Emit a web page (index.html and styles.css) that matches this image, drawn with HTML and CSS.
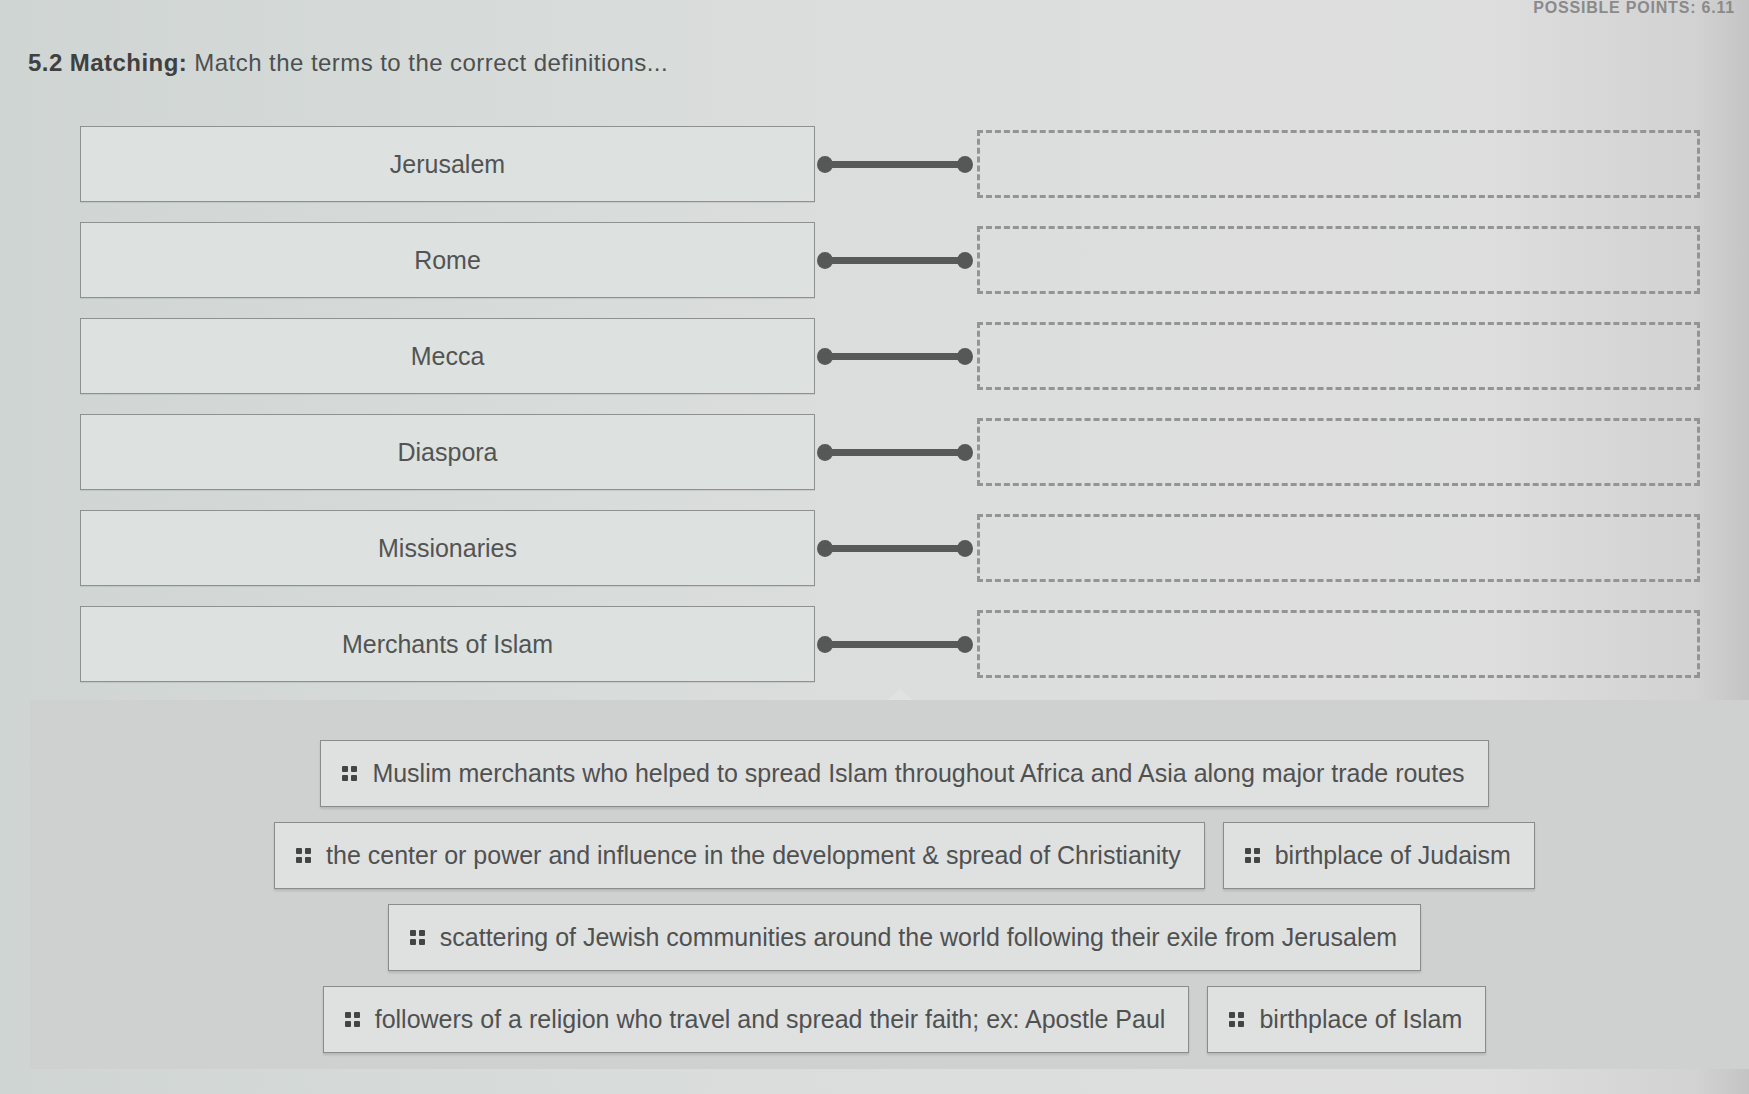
FILE: index.html
```html
<!DOCTYPE html>
<html lang="en">
<head>
<meta charset="utf-8">
<title>5.2 Matching</title>
<link rel="stylesheet" href="styles.css">
</head>
<body>
<div class="page">
  <div class="points">POSSIBLE POINTS: 6.11</div>
  <h2 class="question"><strong>5.2 Matching:</strong> Match the terms to the correct definitions...</h2>

  <div class="pairs">
    <div class="pair">
      <div class="term">Jerusalem</div>
      <div class="link"><span class="dot"></span><span class="bar"></span><span class="dot"></span></div>
      <div class="slot"></div>
    </div>
    <div class="pair">
      <div class="term">Rome</div>
      <div class="link"><span class="dot"></span><span class="bar"></span><span class="dot"></span></div>
      <div class="slot"></div>
    </div>
    <div class="pair">
      <div class="term">Mecca</div>
      <div class="link"><span class="dot"></span><span class="bar"></span><span class="dot"></span></div>
      <div class="slot"></div>
    </div>
    <div class="pair">
      <div class="term">Diaspora</div>
      <div class="link"><span class="dot"></span><span class="bar"></span><span class="dot"></span></div>
      <div class="slot"></div>
    </div>
    <div class="pair">
      <div class="term">Missionaries</div>
      <div class="link"><span class="dot"></span><span class="bar"></span><span class="dot"></span></div>
      <div class="slot"></div>
    </div>
    <div class="pair">
      <div class="term">Merchants of Islam</div>
      <div class="link"><span class="dot"></span><span class="bar"></span><span class="dot"></span></div>
      <div class="slot"></div>
    </div>
  </div>

  <div class="pool">
    <div class="chip"><span class="grip"><i></i><i></i><i></i><i></i></span>Muslim merchants who helped to spread Islam throughout Africa and Asia along major trade routes</div>
    <div class="chip"><span class="grip"><i></i><i></i><i></i><i></i></span>the center or power and influence in the development &amp; spread of Christianity</div>
    <div class="chip"><span class="grip"><i></i><i></i><i></i><i></i></span>birthplace of Judaism</div>
    <div class="chip"><span class="grip"><i></i><i></i><i></i><i></i></span>scattering of Jewish communities around the world following their exile from Jerusalem</div>
    <div class="chip"><span class="grip"><i></i><i></i><i></i><i></i></span>followers of a religion who travel and spread their faith; ex: Apostle Paul</div>
    <div class="chip"><span class="grip"><i></i><i></i><i></i><i></i></span>birthplace of Islam</div>
  </div>
</div>
</body>
</html>
```

FILE: styles.css
```css
* {
  box-sizing: border-box;
}

html,
body {
  margin: 0;
  height: 100%;
  overflow: hidden;
}

body {
  font-family: "Liberation Sans", Arial, sans-serif;
  color: #555;
  background: linear-gradient(90deg, #cfd5d3 0%, #d6dbd9 25%, #dcdedd 55%, #dedede 85%, #d2d2d2 97%, #c4c4c4 100%);
}

.page {
  display: flex;
  flex-direction: column;
}

/* points label in the top corner */
.points {
  align-self: flex-end;
  margin-top: 0;
  padding-right: 14px;
  font-size: 16px;
  line-height: 16px;
  font-weight: bold;
  letter-spacing: 0.8px;
  color: #8a8a8a;
}

.question {
  margin: 32px 0 0 28px;
  font-size: 24px;
  line-height: 30px;
  font-weight: normal;
  letter-spacing: 0.45px;
  color: #4e5050;
}

.question strong {
  color: #404040;
}

/* term rows: term box, connector, dashed drop slot */
.pairs {
  display: flex;
  flex-direction: column;
  gap: 20px;
  margin: 48px 0 0 80px;
}

.pair {
  display: flex;
  align-items: center;
  height: 76px;
}

.term {
  width: 735px;
  height: 76px;
  display: flex;
  align-items: center;
  justify-content: center;
  border: 1.5px solid #8e9190;
  background: #dde1df;
  box-shadow: 0 1px 0 rgba(0, 0, 0, 0.08);
  font-size: 25px;
  color: #525454;
}

.link {
  width: 162px;
  display: flex;
  align-items: center;
  padding: 0 4px 0 2px;
}

.dot {
  width: 16px;
  height: 17px;
  border-radius: 50%;
  background: #575757;
  flex: none;
}

.bar {
  flex: 1;
  height: 7px;
  margin: 0 -3px;
  background: #595959;
}

.slot {
  width: 723px;
  height: 68px;
  border: 3px dashed #939494;
}

/* pool of draggable definitions */
.pool {
  position: relative;
  margin: 18px 0 0 30px;
  padding: 40px 0 16px 30px;
  background: #cfd1d1;
  display: flex;
  flex-wrap: wrap;
  justify-content: center;
  column-gap: 18px;
  row-gap: 15px;
}

.pool::before {
  content: "";
  position: absolute;
  left: 858px;
  top: -12px;
  border-left: 12px solid transparent;
  border-right: 12px solid transparent;
  border-bottom: 12px solid #e0e1e1;
}

.chip {
  height: 67px;
  display: flex;
  align-items: center;
  gap: 15px;
  padding: 0 23px 0 21px;
  border: 1.5px solid #8a8b8b;
  background: #dfe0e0;
  box-shadow: 0 2px 2px rgba(0, 0, 0, 0.12);
  font-size: 25px;
  color: #4f5151;
  white-space: nowrap;
}

.grip {
  display: grid;
  grid-template-columns: 6px 6px;
  grid-template-rows: 6px 6px;
  gap: 3px;
  flex: none;
}

.grip i {
  background: #444;
  border-radius: 1px;
}
```
